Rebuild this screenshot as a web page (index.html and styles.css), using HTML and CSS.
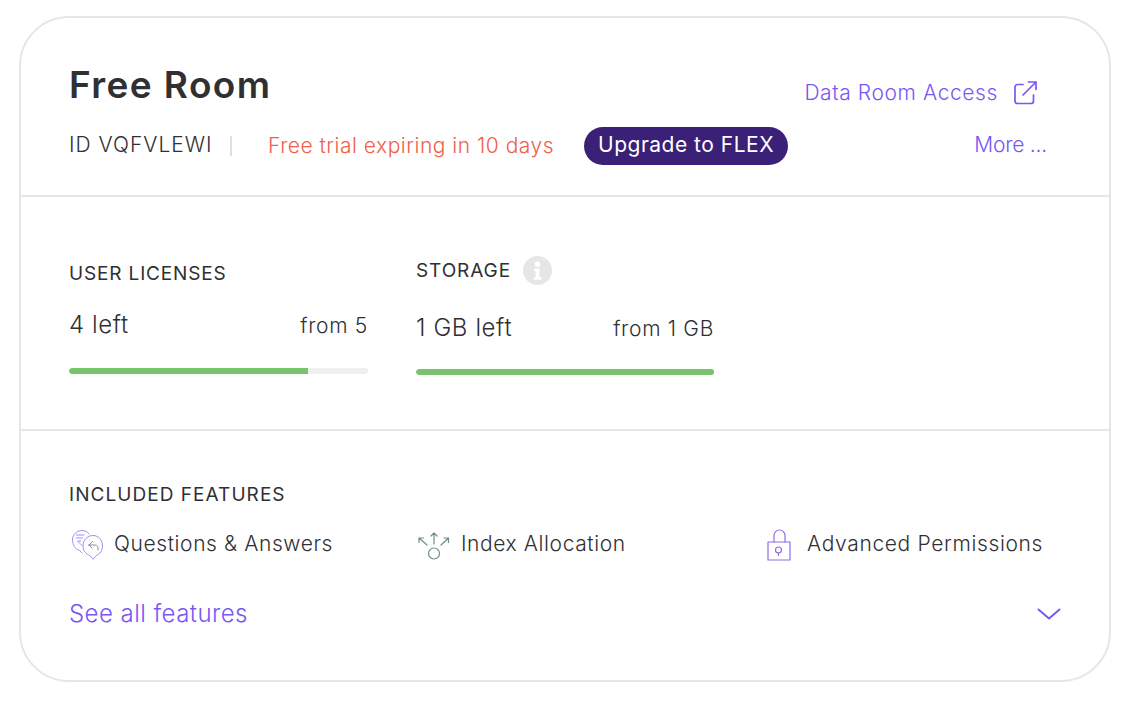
FILE: index.html
```html
<!DOCTYPE html>
<html lang="en">
<head>
<meta charset="utf-8">
<title>Free Room</title>
<link rel="stylesheet" href="styles.css">
</head>
<body>
<main class="card">
  <section class="head">
    <div class="head-top">
      <h1 class="title">Free Room</h1>
      <a class="access">Data Room Access
        <svg class="ext" viewBox="0 0 24 24" fill="none" stroke="#7857f5" stroke-width="1.7" stroke-linecap="round" stroke-linejoin="round"><path d="M10 3.500H4.500A2.500 2.500 0 0 0 2 6v14a2.500 2.500 0 0 0 2.500 2.500h13.500A2.500 2.500 0 0 0 20.500 20v-6"/><path d="M10 14 23 1M15.500 1H23v7.500"/></svg>
      </a>
    </div>
    <div class="head-sub">
      <span class="room-id">ID VQFVLEWI</span>
      <span class="sep"></span>
      <span class="trial">Free trial expiring in 10 days</span>
      <a class="upgrade">Upgrade to FLEX</a>
      <a class="more">More ...</a>
    </div>
  </section>
  <section class="usage">
    <div class="meter meter-users">
      <div class="label label-users">USER LICENSES</div>
      <div class="meter-row"><span class="left">4 left</span><span class="from">from 5</span></div>
      <div class="track"><div class="fill" style="width:80%"></div></div>
    </div>
    <div class="meter meter-storage">
      <div class="label label-storage">STORAGE
        <svg class="info" viewBox="0 0 30 30"><circle cx="15" cy="15" r="15" fill="#e6e6e6"/><circle cx="15" cy="8.500" r="2.800" fill="#fff"/><path d="M11.500 13h5.500v9h2v2.500h-8V22h2v-6.500h-1.500z" fill="#fff"/></svg>
      </div>
      <div class="meter-row"><span class="left">1 GB left</span><span class="from">from 1 GB</span></div>
      <div class="track"><div class="fill" style="width:100%"></div></div>
    </div>
  </section>
  <section class="features">
    <div class="label label-features">INCLUDED FEATURES</div>
    <div class="feature-row">
      <div class="feature">
        <svg class="ficon" viewBox="0 0 32 32" fill="none" stroke="#a78bf5" stroke-width="1" stroke-linecap="round" stroke-linejoin="round"><g transform="translate(2 1)"><path d="M11 24 8.500 21.500C4 20 1.500 15.500 1.500 11 1.500 5.500 6 1.500 11 1.500c3 0 5.500 1 7 3.500"/><path d="M13 6H5.500M11.500 9H5.500M10 12H6.500l4.500 4.500"/><path d="M22 30l-3-3.500C15 25.500 12 21.500 12 17 12 11 16.500 6.500 22 6.500S31.500 11 31.500 17c0 4.500-2.500 8-6 9.500z"/><path d="M18 16h6c2.500 0 3.500 2 3 5M18 16l3.500-3.500M18 16l3 3" stroke="#7f8ca0"/></g></svg>
        <span>Questions &amp; Answers</span>
      </div>
      <div class="feature">
        <svg class="ficon" viewBox="0 0 32 32" fill="none" stroke="#6f8f86" stroke-width="1.200" stroke-linecap="round" stroke-linejoin="round"><circle cx="18" cy="25.500" r="5.500"/><path d="M18 16V5M15 8l3-3 3 3M11 17 3 10M3 14.500V10H7.500M25 17l7.500-7M28 10h4.500v4.500"/></svg>
        <span>Index Allocation</span>
      </div>
      <div class="feature feature-last">
        <svg class="ficon" viewBox="0 0 32 32" fill="none" stroke="#8b6fe8" stroke-width="1.200" stroke-linecap="round" stroke-linejoin="round"><rect x="5" y="14" width="22" height="18"/><path d="M11 14V7.500a5.500 5.500 0 0 1 11 0V14"/><circle cx="15.500" cy="22" r="3"/><path d="M15.500 25v2.500"/></svg>
        <span>Advanced Permissions</span>
      </div>
    </div>
    <div class="see-row">
      <a class="see">See all features</a>
      <svg class="chev" viewBox="0 0 24 12" fill="none" stroke="#7857f5" stroke-width="2" stroke-linecap="round" stroke-linejoin="round"><path d="M1.500 1.500 12 10.500 22.500 1.500"/></svg>
    </div>
  </section>
</main>
</body>
</html>
```

FILE: styles.css
```css
* { box-sizing: border-box; }
html, body { margin: 0; background: #fff; }
body {
  padding: 16px 25px 36px 19px;
  font-family: Inter, "Noto Sans", sans-serif;
  color: #303033;
}
.card {
  border: 2px solid #e6e6e6;
  border-radius: 50px;
  height: 666px;
  display: flex;
  flex-direction: column;
  background: #fff;
}
.head {
  height: 179px;
  padding: 45px 62px 0 48px;
  border-bottom: 2px solid #e6e6e6;
}
.head-top { display: flex; justify-content: space-between; align-items: flex-start; }
.title {
  margin: 0;
  font-size: 37px;
  line-height: 44px;
  font-weight: 600;
  letter-spacing: 1.4px;
}
.access {
  display: flex;
  align-items: center;
  gap: 15px;
  margin: 15px 10px 0 0;
  font-size: 21px;
  line-height: 30px;
  font-weight: 300;
  letter-spacing: 0.6px;
  color: #7857f5;
}
.ext { width: 24px; height: 24px; }
.head-sub {
  display: flex;
  align-items: flex-start;
  margin-top: 18px;
  font-size: 21px;
  line-height: 38px;
  font-weight: 300;
}
.room-id { width: 145px; white-space: nowrap; letter-spacing: 1px; }
.sep { width: 2px; height: 20px; background: #e0e0e0; margin: 10px 36px 0 16px; }
.trial { color: #f0604a; width: 316px; margin-top: 1px; white-space: nowrap; letter-spacing: 0.5px; }
.upgrade {
  background: #3a2077;
  color: #fff;
  border-radius: 19px;
  height: 38px;
  width: 204px;
  margin-top: 1px;
  text-align: center;
  line-height: 36px;
  font-weight: 400;
  letter-spacing: 0.5px;
  white-space: nowrap;
}
.more { margin-left: auto; color: #7857f5; white-space: nowrap; letter-spacing: -0.2px; }
.usage {
  height: 234px;
  display: flex;
  gap: 48px;
  padding: 0 48px;
  border-bottom: 2px solid #e6e6e6;
}
.meter { width: 299px; }
.meter-users { padding-top: 63px; }
.meter-storage { padding-top: 59px; width: 298px; }
.label {
  display: flex;
  align-items: center;
  gap: 12px;
  font-size: 19px;
  line-height: 28px;
  font-weight: 400;
}
.label-users { letter-spacing: 0.85px; }
.label-storage { letter-spacing: 0.9px; }
.label-features { letter-spacing: 1.05px; }
.info { width: 29px; height: 29px; }
.meter-row {
  display: flex;
  justify-content: space-between;
  align-items: baseline;
  margin-top: 21px;
  font-weight: 300;
  line-height: 32px;
}
.meter-storage .meter-row { margin-top: 27px; }
.meter-storage .track { margin-top: 24px; }
.left { font-size: 24px; letter-spacing: 0.6px; }
.from { font-size: 21px; letter-spacing: 0.7px; }
.track {
  height: 6px;
  margin-top: 26px;
  border-radius: 3px;
  background: #efeff1;
  overflow: hidden;
}
.fill { height: 100%; background: #78c46e; border-radius: 3px 0 0 3px; }
.features { padding: 50px 48px 0 48px; }
.feature-row { display: flex; margin-top: 18px; }
.feature {
  display: flex;
  flex: none;
  align-items: center;
  gap: 13px;
  width: 347px;
  font-size: 21px;
  font-weight: 300;
  letter-spacing: 0.6px;
  line-height: 34px;
  white-space: nowrap;
}
.feature-last { gap: 12px; letter-spacing: 0.65px; }
.ficon { width: 32px; height: 32px; flex: none; overflow: visible; }
.see-row { display: flex; justify-content: space-between; align-items: center; margin-top: 36px; }
.see { font-size: 24px; line-height: 34px; font-weight: 300; letter-spacing: 0.45px; color: #7857f5; }
.chev { width: 24px; height: 12px; }
```
